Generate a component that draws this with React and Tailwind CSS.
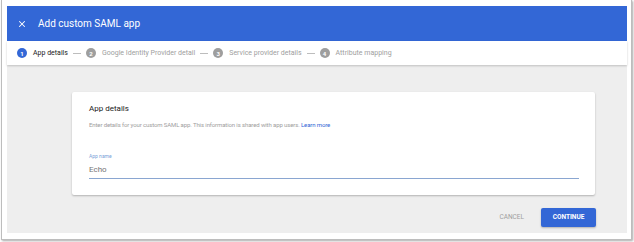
import { X } from 'lucide-react';

const steps = [
  { n: 1, label: 'App details', active: true },
  { n: 2, label: 'Google Identity Provider detail' },
  { n: 3, label: 'Service provider details' },
  { n: 4, label: 'Attribute mapping' },
];

export default function App() {
  return (
    <div className="w-[634px] h-[242px] bg-white font-['Roboto',sans-serif]">
      <div className="ml-px w-[631px] h-[240px] bg-white border-l border-r border-b border-[#bdbdbd] shadow-[1px_1px_2px_rgba(0,0,0,0.35)] pl-[5px] pt-[6px]">
        <div className="w-[620px] flex flex-col">
          {/* header */}
          <div className="h-[35px] bg-[#3367d6] flex items-center pl-[10px] text-white">
            <X className="w-[10px] h-[10px]" strokeWidth={2.5} />
            <span className="ml-[11px] text-[10px] leading-none">Add custom SAML app</span>
          </div>

          {/* stepper */}
          <div className="relative z-10 h-[24px] bg-white shadow-[0_1px_2px_rgba(0,0,0,0.2)] flex items-center pl-[10px] text-[7px]">
            {steps.map((s, i) => (
              <div key={s.n} className="flex items-center">
                {i > 0 && <div className="w-[8px] h-px bg-[#bdbdbd] mx-[5px]" />}
                <span
                  className={
                    'w-[10px] h-[10px] rounded-full flex items-center justify-center text-white text-[6px] font-bold ' +
                    (s.active ? 'bg-[#3367d6]' : 'bg-[#9e9e9e]')
                  }
                >
                  {s.n}
                </span>
                <span className={'ml-[6px] ' + (s.active ? 'text-[#212121]' : 'text-[#9e9e9e]')}>
                  {s.label}
                </span>
              </div>
            ))}
          </div>

          {/* body */}
          <div className="h-[168px] bg-[#eeeeee] pt-[27px] pl-[65px]">
            <div className="w-[523px] h-[103px] bg-white rounded-[2px] shadow-[0_1px_2px_rgba(0,0,0,0.25)] pl-[17px] pr-[16px] pt-[12px]">
              <div className="text-[8px] leading-[10px] text-[#212121]">App details</div>
              <div className="mt-[7px] text-[6px] leading-[8px] tracking-[-0.12px] text-[#9e9e9e]">
                Enter details for your custom SAML app. This information is shared with app users.{' '}
                <span className="text-[#3367d6]">Learn more</span>
              </div>
              <div className="mt-[24px] text-[5px] leading-[6px] text-[#7b9fd8]">App name</div>
              <div className="mt-[6px] text-[8px] leading-[10px] text-[#757575]">Echo</div>
              <div className="mt-[3px] h-px bg-[#8aa6d1]" />
            </div>
            <div className="w-[524px] mt-[13px] flex items-center justify-end">
              <span className="text-[6.5px] text-[#9e9e9e] mr-[17px]">CANCEL</span>
              <button className="w-[55px] h-[19px] bg-[#3367d6] rounded-[2px] shadow-[0_1px_2px_rgba(0,0,0,0.25)] text-white text-[6.5px] font-bold">
                CONTINUE
              </button>
            </div>
          </div>
        </div>
      </div>
    </div>
  );
}
